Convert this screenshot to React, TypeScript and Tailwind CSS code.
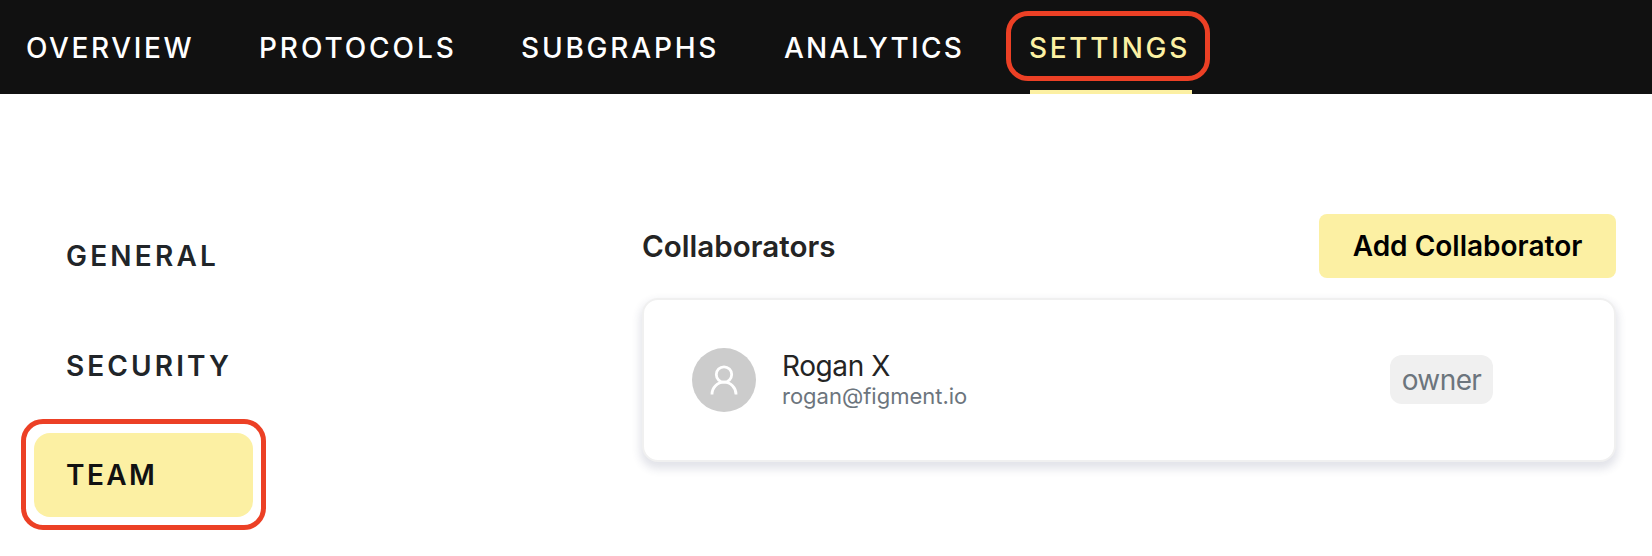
const nav = [
  { label: "OVERVIEW", cls: "ml-[26px] w-[168px] tracking-[2.6px]" },
  { label: "PROTOCOLS", cls: "ml-[65px] w-[199px] tracking-[2.9px]" },
  { label: "SUBGRAPHS", cls: "ml-[63px] w-[199px] tracking-[2.8px]" },
  { label: "ANALYTICS", cls: "ml-[64px] w-[181px] tracking-[2.25px]" },
];

function UserIcon() {
  return (
    <svg viewBox="0 0 64 64" className="size-[64px]" fill="none" stroke="#ffffff" strokeWidth="2.8">
      <circle cx="32" cy="26.5" r="7.7" />
      <path d="M20 46.6v-.4a12 12 0 0 1 24 0v.4" strokeLinecap="butt" />
    </svg>
  );
}

export default function App() {
  return (
    <div className="h-[556px] w-full overflow-hidden bg-white font-[Inter,sans-serif] text-[#212529]">
      <nav className="flex h-[94px] bg-[#111111] text-[28px] leading-[96px] font-medium text-white">
        {nav.map((n) => (
          <a key={n.label} className={`block whitespace-nowrap ${n.cls}`}>{n.label}</a>
        ))}
        <div className="ml-[41px] flex h-[94px] w-[204px] flex-col pt-[11px] tracking-[2.7px] text-[#fcf0a3]">
          <div className="h-[70px] w-[204px] shrink-0 rounded-[22px] border-[5px] border-[#ec4025] pl-[18px] leading-[64px]">SETTINGS</div>
          <div className="mt-[9px] ml-[24px] h-[4px] w-[162px] bg-[#fcf0a3]" />
        </div>
      </nav>
      <main className="flex">
        <aside className="w-[642px] pl-[21px] pt-[120px] text-[28px] font-semibold tracking-[3px]">
          <div className="h-[84px] pl-[45px] leading-[84px] tracking-[3.2px]">GENERAL</div>
          <div className="mt-[26px] h-[84px] pl-[45px] leading-[84px] tracking-[3.1px]">SECURITY</div>
          <div className="mt-[11px] h-[111px] w-[245px] rounded-[22px] border-[5px] border-[#ec4025] px-[8px] pt-[9px]">
            <div className="h-[84px] rounded-[16px] bg-[#fcf0a3] pl-[32px] leading-[84px] tracking-[2.4px] text-[#111111]">TEAM</div>
          </div>
        </aside>
        <section className="w-[974px] pt-[120px]">
          <div className="flex h-[64px] items-center justify-between text-[28px] font-semibold">
            <h1 className="text-[29.6px] text-[#242424]">Collaborators</h1>
            <button className="h-[64px] w-[297px] rounded-[8px] bg-[#fcf0a3] text-black">Add Collaborator</button>
          </div>
          <div className="mt-[20px] flex h-[164px] items-center rounded-[16px] border-2 border-[#f0f0f0] bg-white pr-[121px] pl-[48px] shadow-[0_5px_8px_2px_rgba(50,60,100,0.14)]">
            <div className="size-[64px] rounded-full bg-[#cccccc]">
              <UserIcon />
            </div>
            <div className="mb-px ml-[26px]">
              <div className="text-[28px] leading-[32px] tracking-[-0.4px] text-[#242424]">Rogan X</div>
              <div className="text-[22px] leading-[28px] text-[#6c757d]">rogan@figment.io</div>
            </div>
            <div className="mb-px ml-auto h-[49px] w-[103px] rounded-[12px] bg-[#f0f0f0] text-center text-[28px] leading-[50px] tracking-[-0.6px] text-[#6c757d]">owner</div>
          </div>
        </section>
      </main>
    </div>
  );
}
